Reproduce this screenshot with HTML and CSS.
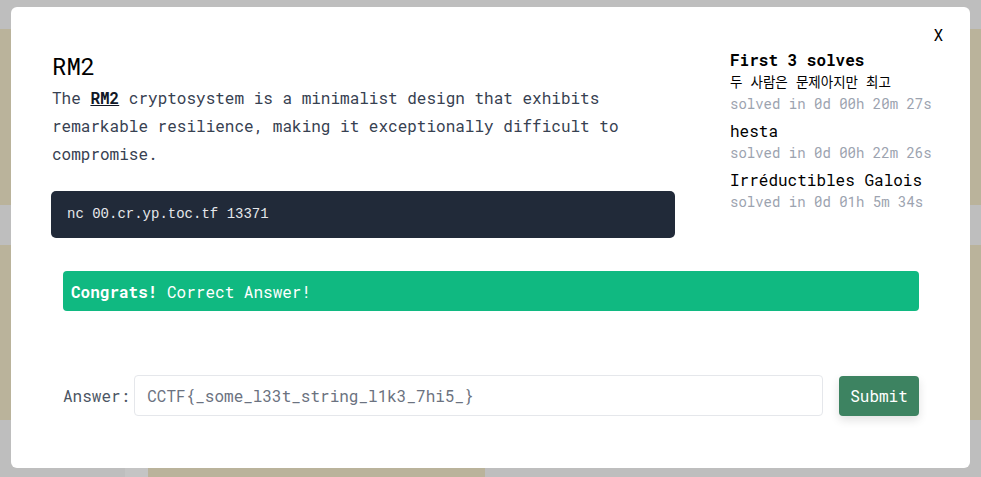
FILE: index.html
```html
<!DOCTYPE html>
<html>
<head>
<meta charset="utf-8">
<link rel="stylesheet" href="styles.css">
</head>
<body>
<div class="page">
  <div class="card card-a"></div>
  <div class="card card-b"></div>
  <div class="bottom-row">
    <div class="strip"></div>
    <div class="card-c"></div>
  </div>
</div>

<div class="modal">
  <button class="close">X</button>
  <div class="top">
    <div class="main">
      <h1 class="title">RM2</h1>
      <p class="desc">The <a class="link">RM2</a> cryptosystem is a minimalist design that exhibits remarkable resilience, making it exceptionally difficult to compromise.</p>
      <pre class="code">nc 00.cr.yp.toc.tf 13371</pre>
    </div>
    <div class="solves">
      <div class="solves-head">First 3 solves</div>
      <div class="solver">
        <div class="name ko">두 사람은 문제아지만 최고</div>
        <div class="time">solved in 0d 00h 20m 27s</div>
      </div>
      <div class="solver">
        <div class="name">hesta</div>
        <div class="time">solved in 0d 00h 22m 26s</div>
      </div>
      <div class="solver">
        <div class="name">Irréductibles Galois</div>
        <div class="time">solved in 0d 01h 5m 34s</div>
      </div>
    </div>
  </div>
  <div class="alert"><strong>Congrats!</strong> Correct Answer!</div>
  <form class="answer">
    <label class="answer-label">Answer:</label>
    <input class="answer-input" type="text" placeholder="CCTF{_some_l33t_string_l1k3_7hi5_}">
    <button class="submit" type="button">Submit</button>
  </form>
</div>
</body>
</html>
```

FILE: styles.css
```css
* { box-sizing: border-box; }
html, body { margin: 0; padding: 0; }
body {
  width: 981px;
  height: 477px;
  overflow: hidden;
  background: #bebebe;
  font-family: "Roboto Mono", "Liberation Mono", monospace;
}
.page {
  padding-top: 29px;
  display: flex;
  flex-direction: column;
}
.card { background: #bab39b; }
.card-a { height: 176px; }
.card-b { height: 175px; margin-top: 40px; }
.bottom-row { display: flex; margin-top: 42px; height: 15px; }
.strip { width: 23px; margin-left: 125px; background: #c4c4c4; }
.card-c { width: 337px; background: #bab39b; }

.modal {
  position: absolute;
  left: 11px;
  top: 7px;
  width: 959px;
  height: 461px;
  background: #fff;
  border-radius: 6px;
  padding: 41px 40px 0 40px;
}
.close {
  position: absolute;
  top: 16px;
  right: 27px;
  border: 0;
  background: none;
  padding: 0;
  font-family: inherit;
  font-size: 16px;
  line-height: 24px;
  color: #000;
}
.top { display: flex; gap: 55px; }
.main { width: 624px; }
.title {
  margin: 2px 0 0 1px;
  font-size: 24px;
  font-weight: 400;
  line-height: 32px;
  color: #000;
}
.desc {
  margin: 2px 0 0 1px;
  font-size: 16px;
  line-height: 28px;
  color: #374151;
}
.link {
  color: #111827;
  font-weight: 700;
  text-decoration: underline;
}
.code {
  margin: 23px 0 0 0;
  background: #212a39;
  border-radius: 5px;
  padding: 14px 16px;
  font-family: "Liberation Mono", "DejaVu Sans Mono", monospace;
  font-size: 14px;
  line-height: 19px;
  color: #e5e7eb;
}
.solves { width: 200px; padding-top: 2px; }
.solves-head {
  font-size: 16px;
  font-weight: 700;
  line-height: 20px;
  color: #000;
}
.solver { margin-bottom: 5px; }
.name {
  font-size: 16px;
  line-height: 24px;
  color: #000;
  white-space: nowrap;
}
.name.ko {
  font-family: "Roboto Mono", "Liberation Mono", "Noto Sans CJK KR", monospace;
  font-size: 13.5px;
}
.time {
  font-size: 14px;
  line-height: 20px;
  color: #9ca3af;
  white-space: nowrap;
}
.alert {
  margin: 33px 11px 0 12px;
  height: 40px;
  background: #10b981;
  border-radius: 4px;
  padding: 0 8px;
  display: flex;
  align-items: center;
  gap: 0.6em;
  font-size: 16px;
  color: #fff;
}
.alert strong { font-weight: 700; }
.answer {
  margin: 64px 11px 0 12px;
  display: flex;
  align-items: center;
}
.answer-label {
  font-size: 16px;
  color: #4b5563;
  margin-right: 4px;
}
.answer-input {
  width: 689px;
  height: 41px;
  border: 1px solid #e5e7eb;
  border-radius: 4px;
  padding: 0 12px;
  font-family: inherit;
  font-size: 16px;
  color: #111827;
  background: #fff;
}
.answer-input::placeholder { color: #6b7280; }
.submit {
  margin-left: 16px;
  width: 80px;
  height: 40px;
  border: 0;
  border-radius: 4px;
  background: #3d8361;
  color: #fff;
  font-family: inherit;
  font-size: 16px;
  box-shadow: 0 4px 10px rgba(0,0,0,0.12);
}
```
